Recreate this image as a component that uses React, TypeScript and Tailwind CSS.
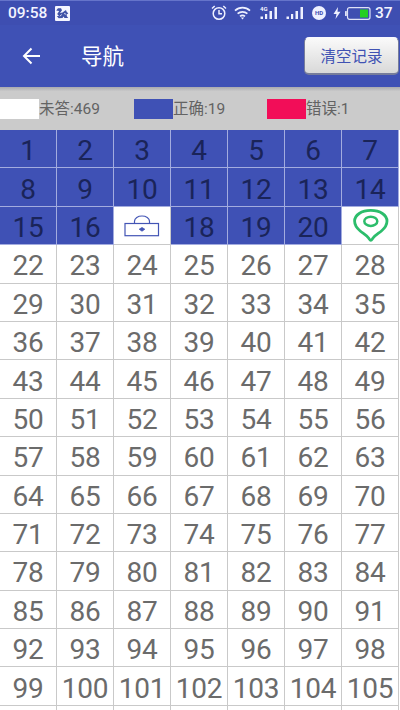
import React from "react";

const answered = new Set([...Array(20)].map((_, i) => i + 1).filter((n) => n !== 17));

function Lock() {
  return (
    <svg className="-mt-[3px]" width="36" height="22" viewBox="0 0 36 22" fill="none" stroke="#4355b5" strokeWidth="1.200">
      <rect x="1" y="8.500" width="33.500" height="12.200" />
      <path d="M10.500 8V6.200C10.500 3 14 1 18 1s7.500 2 7.500 5.200V8" />
      <path d="M15.200 14.200 18 12.500l2.800 1.700L18 16.200z" fill="#4355b5" strokeWidth="0.800" />
    </svg>
  );
}

function Pin() {
  return (
    <svg className="-mt-[4px] ml-[2px]" width="36" height="33" viewBox="0 0 36 33" fill="none" stroke="#2cbd6b" strokeWidth="2.800">
      <path d="M17.800 1.400C8.500 1.400 1.600 6 1.600 12.100c0 4.400 2.400 7.300 5.600 9.900 3.400 2.700 6.400 4.200 8.600 7.300.9 1.300 1.300 2 2 2s1.100-.7 2-2c2.200-3.100 5.200-4.600 8.600-7.300 3.200-2.600 5.600-5.500 5.600-9.900C34 6 27.100 1.400 17.800 1.400z" />
      <ellipse cx="17.800" cy="12.300" rx="6.500" ry="4.600" strokeWidth="2.500" />
    </svg>
  );
}

function Signal() {
  return (
    <svg width="18" height="14" viewBox="0 0 18 14" fill="#eef0ff">
      <rect x="0.500" y="10.500" width="2.500" height="2.500" />
      <rect x="5" y="8" width="2.200" height="5" />
      <rect x="9.500" y="5" width="2.500" height="8" />
      <rect x="14.500" y="1" width="2.500" height="12" />
    </svg>
  );
}

function StatusBar() {
  return (
    <div className="flex h-[25px] items-center border-t border-[#6574ca] bg-[#3e4eb1] pl-[8px] text-[#f3f4ff]">
      <span className="w-[47px] pt-[2px] font-['Roboto'] text-[15.500px] leading-none font-medium">09:58</span>
      <svg width="15" height="15" viewBox="0 0 15 15">
        <rect width="15" height="15" rx="1" fill="#f4f5ff" />
        <path d="M1.200 4.500 3 2.200h3L7 4.200 5 7l2.500-.5 2-1.500L11 4l.5 1.500 1.800 2-1.800 1 .5 2 1.300 1.500H9.500l-1-1.500-1 1.500-3.800.3L1.800 10H4L2.200 8l2-3z" fill="#4052a8" />
        <path d="m4.800 10.200 2-1.700M9 7.500l2 .7" stroke="#f4f5ff" strokeWidth="0.800" />
      </svg>
      <div className="ml-[141px] flex items-center">
        <svg width="16" height="16" viewBox="0 0 16 16" fill="none" stroke="#eef0ff" strokeWidth="1.500">
          <circle cx="8" cy="8.500" r="5.800" />
          <path d="M8 5v3.800h3M1 3.500 3.700 1M15 3.500 12.300 1" />
        </svg>
        <svg className="ml-[7px]" width="17" height="14" viewBox="0 0 17 14" fill="none" stroke="#eef0ff" strokeWidth="1.700">
          <path d="M1 4.700C5.300.6 11.700.6 16 4.700M3.600 7.700c2.800-2.500 7-2.500 9.800 0M6 10.300c1.500-1.200 3.500-1.200 5 0" />
          <path d="m6.800 11.500 1.700 2 1.700-2z" fill="#eef0ff" stroke="none" />
        </svg>
        <div className="relative ml-[9px]">
          <Signal />
          <span className="absolute top-0 left-0 font-['Roboto'] text-[6px] leading-none font-bold">4G</span>
        </div>
        <div className="ml-[8px]">
          <Signal />
        </div>
        <div className="ml-[8px] flex size-[14px] items-center justify-center rounded-full bg-[#eef0ff] font-['Roboto'] text-[6px] leading-none font-bold text-[#3e4eb1]">HD</div>
        <svg className="ml-[7px]" width="8" height="12" viewBox="0 0 8 12" fill="#eef0ff">
          <path d="M5 0 .5 7H3.500L2.500 12 7.500 4.800H4.500z" />
        </svg>
        <svg className="ml-[4px]" width="26" height="13" viewBox="0 0 26 13" fill="none">
          <rect x="2.500" y="0.700" width="22.500" height="11.600" rx="2" stroke="#dfe2f7" strokeWidth="1.200" />
          <rect x="0" y="4" width="1.800" height="5" rx="0.500" fill="#dfe2f7" />
          <rect x="15" y="2.500" width="8" height="8" fill="#25cf22" />
        </svg>
        <span className="ml-[4px] pt-[2px] font-['Roboto'] text-[15.500px] leading-none font-medium">37</span>
      </div>
    </div>
  );
}

function Legend({ color, text, width }: { color: string; text: string; width: string }) {
  return (
    <div className={`flex items-center ${width}`}>
      <div className={`h-[20px] w-[39px] shrink-0 ${color}`} />
      <span className="pt-[2px] font-['Roboto','Noto_Sans_CJK_SC',sans-serif] text-[15.500px] leading-none whitespace-nowrap text-[#636363]">{text}</span>
    </div>
  );
}

function Cell({ n }: { n: number }) {
  const blue = answered.has(n);
  const tone = blue ? "border-[#a3acdf] bg-[#3f51b5] text-[#1a2459]" : "border-[#c9c9c9] bg-white text-[#6b6b6b]";
  return (
    <div className={`flex items-center justify-center border-r border-b pt-[5px] ${tone}`}>
      {n === 17 ? <Lock /> : n === 21 ? <Pin /> : n <= 105 ? <span>{n}</span> : null}
    </div>
  );
}

export default function App() {
  return (
    <div className="h-[710px] w-[400px] overflow-hidden bg-white">
      <StatusBar />
      <header className="flex h-[62px] items-center bg-[#3f51b5]">
        <svg className="ml-[22px]" width="19" height="18" viewBox="0 0 19 18" fill="none" stroke="#fff" strokeWidth="2">
          <path d="M18 9H2M9.500 1.500 2 9l7.500 7.500" />
        </svg>
        <h1 className="ml-[40px] pb-[2px] font-['Noto_Sans_CJK_SC',sans-serif] text-[21.500px] leading-none font-normal text-white">导航</h1>
        <button className="mr-[1px] ml-auto h-[38px] w-[95px] rounded-[5px] border border-b-2 border-[#777d9b] border-t-[#f8f8ff] bg-linear-to-b from-[#fafafa] to-[#d9d9d9] font-['Noto_Sans_CJK_SC',sans-serif] text-[15.500px] leading-none text-[#4052b3]">清空记录</button>
      </header>
      <div className="flex h-[43px] items-center bg-linear-to-b from-[#aaaaaf] via-[#cbcbcb] via-10% to-[#cbcbcb]">
        <Legend color="bg-white" text="未答:469" width="w-[134px]" />
        <Legend color="bg-[#3f51b5]" text="正确:19" width="w-[133px]" />
        <Legend color="bg-[#f20d58]" text="错误:1" width="w-[133px]" />
      </div>
      <div className="grid w-[399px] auto-rows-[38.400px] grid-cols-7 font-['Roboto'] text-[28px] leading-none tracking-[-0.200px]">
        {Array.from({ length: 112 }, (_, i) => (
          <Cell key={i} n={i + 1} />
        ))}
      </div>
    </div>
  );
}
